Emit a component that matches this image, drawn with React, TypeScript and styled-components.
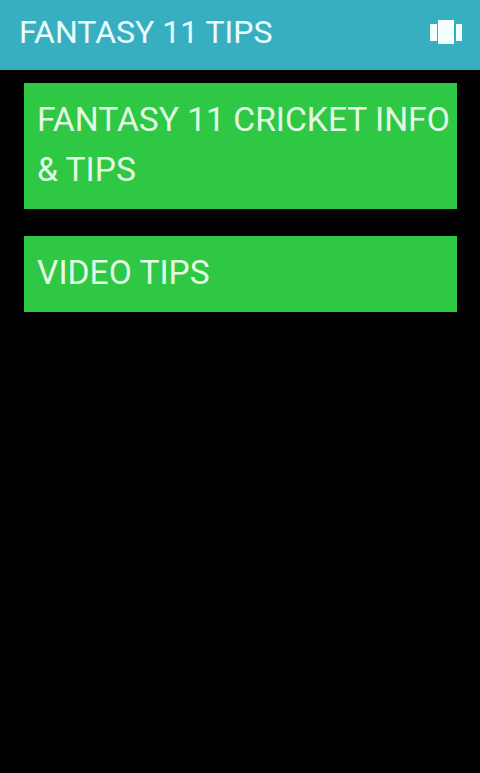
import React from "react";
import styled, { createGlobalStyle } from "styled-components";

const Global = createGlobalStyle`
  html, body { margin: 0; padding: 0; background: #000; }
  #root { width: 480px; height: 773px; overflow: hidden; }
`;

const Screen = styled.div`
  width: 480px;
  height: 773px;
  background: #000;
  font-family: Roboto, "Liberation Sans", sans-serif;
  display: flex;
  flex-direction: column;
`;

const AppBar = styled.header`
  height: 70px;
  box-sizing: border-box;
  background: #38afc1;
  border-bottom: 1px solid #4f9aa6;
  padding: 0 18px 0 19px;
  display: flex;
  align-items: center;
  justify-content: space-between;
`;

const Title = styled.h1`
  margin: 0;
  font-size: 32px;
  font-weight: 400;
  color: #e8fdfe;
  line-height: 1;
  position: relative;
  top: -3px;
`;

const Menu = styled.div`
  display: flex;
  flex-direction: column;
  gap: 27px;
  padding: 13px 23px 0 24px;
`;

const Card = styled.div<{ $height: number }>`
  height: ${(p) => p.$height}px;
  box-sizing: border-box;
  background: #2fc844;
  padding: 12px 0 0 13px;
  color: #e2fae4;
  font-size: 33.6px;
  font-weight: 400;
  line-height: 50px;
  white-space: nowrap;
`;

const Icon = styled.svg`
  width: 32px;
  height: 24px;
  display: block;
  position: relative;
  top: -3px;
`;

export default function App() {
  return (
    <Screen>
      <Global />
      <AppBar>
        <Title>FANTASY 11 TIPS</Title>
        <Icon viewBox="0 0 32 24" aria-hidden="true">
          <rect x="0" y="4" width="7" height="17" fill="#f2ffff" />
          <rect x="8" y="0" width="16" height="24" rx="1" fill="#f5ffff" />
          <rect x="26" y="4" width="6" height="17" fill="#f2ffff" />
        </Icon>
      </AppBar>
      <Menu>
        <Card $height={126}>
          FANTASY 11 CRICKET INFO
          <br />& TIPS
        </Card>
        <Card $height={76}>VIDEO TIPS</Card>
      </Menu>
    </Screen>
  );
}
